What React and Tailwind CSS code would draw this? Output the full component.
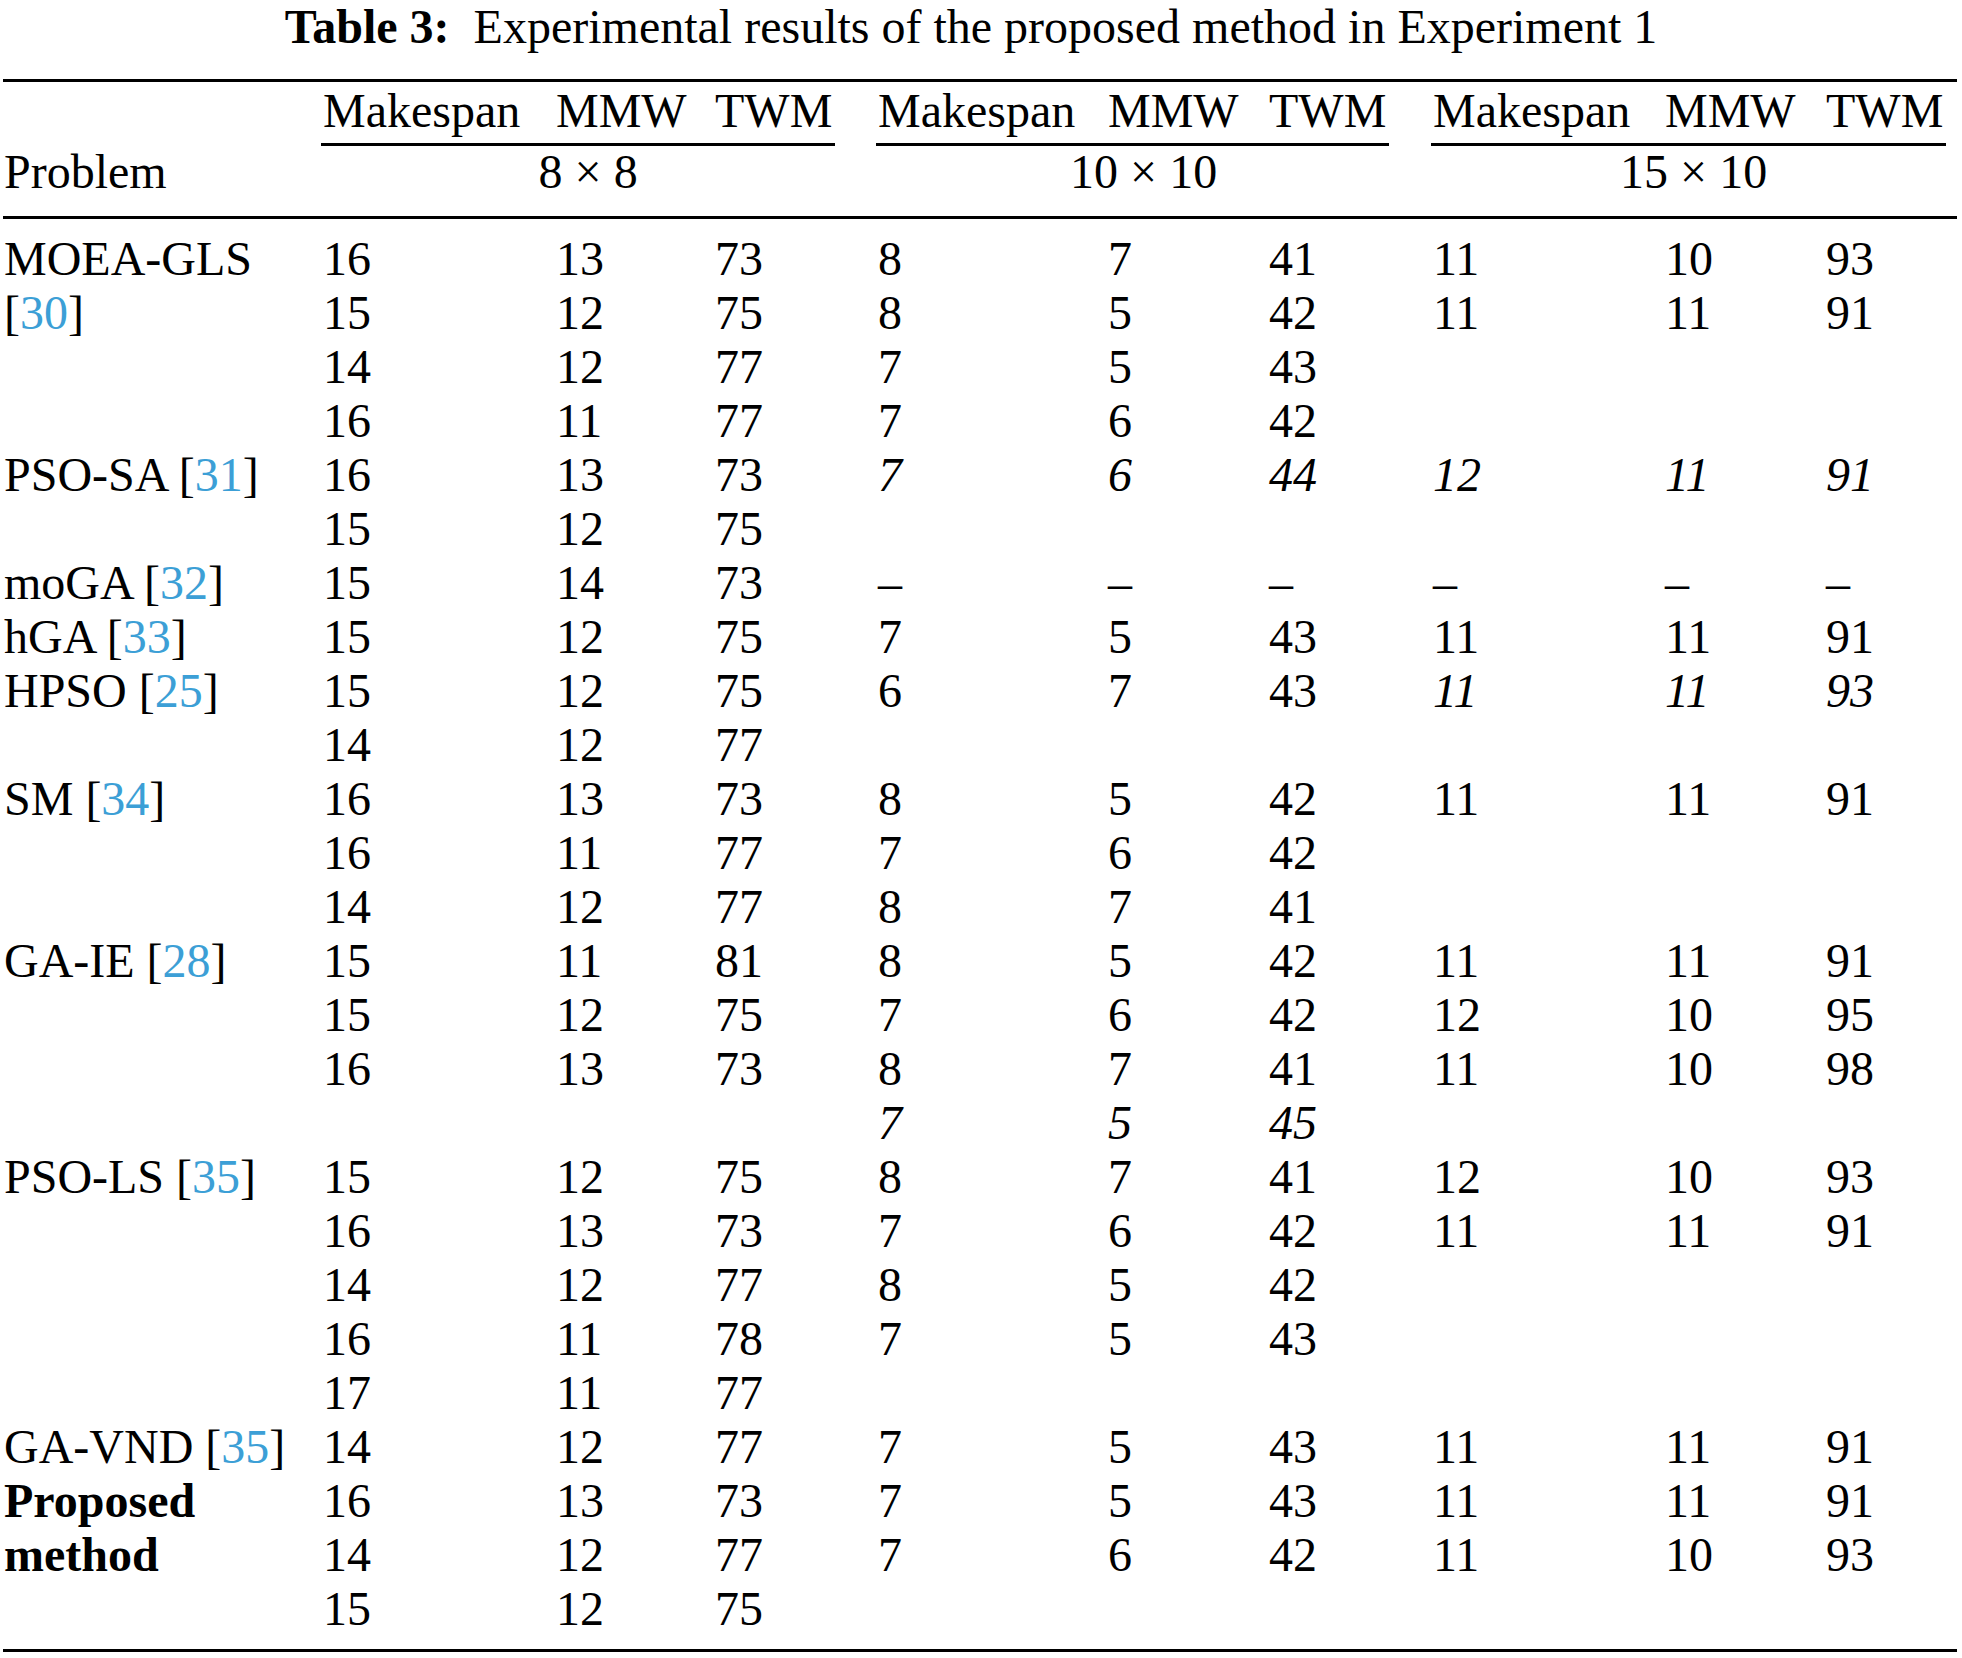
import React from 'react';

function Ref({ n }) {
  return <span className="text-[#3c9fd6]">{n}</span>;
}

const rows = [
  { p: 'MOEA-GLS', a: ['16', '13', '73'], b: ['8', '7', '41'], c: ['11', '10', '93'] },
  { p: <>[<Ref n="30" />]</>, a: ['15', '12', '75'], b: ['8', '5', '42'], c: ['11', '11', '91'] },
  { a: ['14', '12', '77'], b: ['7', '5', '43'] },
  { a: ['16', '11', '77'], b: ['7', '6', '42'] },
  { p: <>PSO-SA [<Ref n="31" />]</>, a: ['16', '13', '73'], b: ['7', '6', '44'], bi: true, c: ['12', '11', '91'], ci: true },
  { a: ['15', '12', '75'] },
  { p: <>moGA [<Ref n="32" />]</>, a: ['15', '14', '73'], b: ['–', '–', '–'], c: ['–', '–', '–'] },
  { p: <>hGA [<Ref n="33" />]</>, a: ['15', '12', '75'], b: ['7', '5', '43'], c: ['11', '11', '91'] },
  { p: <>HPSO [<Ref n="25" />]</>, a: ['15', '12', '75'], b: ['6', '7', '43'], c: ['11', '11', '93'], ci: true },
  { a: ['14', '12', '77'] },
  { p: <>SM [<Ref n="34" />]</>, a: ['16', '13', '73'], b: ['8', '5', '42'], c: ['11', '11', '91'] },
  { a: ['16', '11', '77'], b: ['7', '6', '42'] },
  { a: ['14', '12', '77'], b: ['8', '7', '41'] },
  { p: <>GA-IE [<Ref n="28" />]</>, a: ['15', '11', '81'], b: ['8', '5', '42'], c: ['11', '11', '91'] },
  { a: ['15', '12', '75'], b: ['7', '6', '42'], c: ['12', '10', '95'] },
  { a: ['16', '13', '73'], b: ['8', '7', '41'], c: ['11', '10', '98'] },
  { b: ['7', '5', '45'], bi: true },
  { p: <>PSO-LS [<Ref n="35" />]</>, a: ['15', '12', '75'], b: ['8', '7', '41'], c: ['12', '10', '93'] },
  { a: ['16', '13', '73'], b: ['7', '6', '42'], c: ['11', '11', '91'] },
  { a: ['14', '12', '77'], b: ['8', '5', '42'] },
  { a: ['16', '11', '78'], b: ['7', '5', '43'] },
  { a: ['17', '11', '77'] },
  { p: <>GA-VND [<Ref n="35" />]</>, a: ['14', '12', '77'], b: ['7', '5', '43'], c: ['11', '11', '91'] },
  { p: <span className="font-bold">Proposed</span>, a: ['16', '13', '73'], b: ['7', '5', '43'], c: ['11', '11', '91'] },
  { p: <span className="font-bold">method</span>, a: ['14', '12', '77'], b: ['7', '6', '42'], c: ['11', '10', '93'] },
  { a: ['15', '12', '75'] },
];

const cols = 'grid grid-cols-[320px_233px_159px_163px_230px_161px_164px_232px_161px_1fr]';

function Group({ grid, size, shift }) {
  return (
    <div className="col-span-3 flex">
      <div className="flex flex-col -ml-[2px]">
        <div className={`${grid} pl-[2px] pr-[3px] pb-[5px] border-b-[3px] border-black`}>
          <span>Makespan</span>
          <span>MMW</span>
          <span>TWM</span>
        </div>
        <div className={`text-center -mt-[1px] ${shift}`}>{size}</div>
      </div>
    </div>
  );
}

function Cells({ vals, italic }) {
  const v = vals || ['', '', ''];
  return v.map((x, i) => (
    <div key={i} className={italic ? 'italic' : ''}>
      {x}
    </div>
  ));
}

export default function App() {
  return (
    <div className="w-[1962px] min-h-[1658px] bg-white text-black font-['Liberation_Serif','Times_New_Roman',serif] text-[48px] leading-[54px] pl-[3px] pr-[5px]">
      <div className="text-center mb-[25px] pr-[18px]">
        <span className="font-bold">Table 3:</span>
        <span className="ml-[24px]">Experimental results of the proposed method in Experiment 1</span>
      </div>

      <div className="h-[3px] bg-black" />

      <div className={`${cols} pt-[2px] pb-[17px]`}>
        <div className="self-end pl-[1px]">Problem</div>
        <Group grid="grid grid-cols-[233px_159px_auto]" size="8 × 8" shift="pl-[20px]" />
        <Group grid="grid grid-cols-[230px_161px_auto]" size="10 × 10" shift="pl-[22px]" />
        <Group grid="grid grid-cols-[232px_161px_auto]" size="15 × 10" shift="pl-[10px]" />
      </div>

      <div className="h-[3px] bg-black" />

      <div className={`${cols} pt-[13px] pb-[13px]`}>
        {rows.map((r, i) => (
          <React.Fragment key={i}>
            <div className="whitespace-nowrap pl-[1px]">{r.p || ''}</div>
            <Cells vals={r.a} />
            <Cells vals={r.b} italic={r.bi} />
            <Cells vals={r.c} italic={r.ci} />
          </React.Fragment>
        ))}
      </div>

      <div className="h-[3px] bg-black" />
    </div>
  );
}
